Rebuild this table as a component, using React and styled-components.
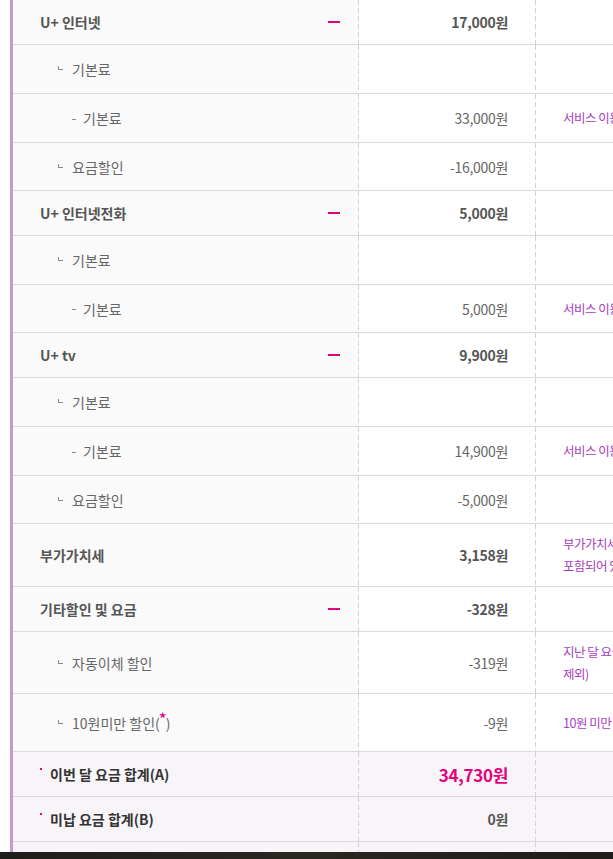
import React from 'react';
import styled, { createGlobalStyle } from 'styled-components';

const GlobalStyle = createGlobalStyle`
  html, body {
    margin: 0;
    padding: 0;
    background: #ffffff;
    overflow: hidden;
  }
  body {
    font-family: "Noto Sans CJK KR", "Noto Sans", sans-serif;
  }
`;

const Page = styled.div`
  width: 613px;
  height: 859px;
  display: flex;
  flex-direction: column;
  overflow: hidden;
`;

const Table = styled.div`
  flex: 1;
  margin-left: 10px;
  border-left: 3px solid #c39bcf;
  display: flex;
  flex-direction: column;
`;

const Row = styled.div`
  display: grid;
  grid-template-columns: 346px 177px 260px;
  height: ${p => p.$h}px;
  box-sizing: border-box;
  border-bottom: 1px solid #dadada;
  background: ${p => (p.$total ? '#f7f5f8' : '#ffffff')};
`;

const Filler = styled(Row)`
  flex: 1;
  height: auto;
  border-bottom: 0;
`;

const dashed = `
  background-image: linear-gradient(#d2d2d2 62%, transparent 0);
  background-size: 1px 8px;
  background-repeat: repeat-y;
  background-position: right top;
`;

const LabelCell = styled.div`
  display: flex;
  align-items: center;
  padding-left: ${p => p.$indent}px;
  padding-right: 19px;
  background-color: ${p => (p.$total ? 'transparent' : '#fafafa')};
  ${dashed}
  font-size: 14px;
  color: ${p => (p.$strong ? '#555555' : '#666666')};
  font-weight: ${p => (p.$strong ? 700 : 400)};
  white-space: nowrap;
`;

const LabelText = styled.span`
  flex: 1;
`;

const AmountCell = styled.div`
  display: flex;
  align-items: center;
  justify-content: flex-end;
  padding-right: 28px;
  ${dashed}
  font-size: ${p => (p.$big ? '17px' : '14px')};
  font-weight: ${p => (p.$strong ? 700 : 400)};
  color: ${p => (p.$big ? '#e5007e' : p.$strong ? '#555555' : '#666666')};
  letter-spacing: -0.3px;
  white-space: nowrap;
`;

const NoteCell = styled.div`
  display: flex;
  flex-direction: column;
  justify-content: center;
  padding-left: 27px;
  font-size: 12.5px;
  line-height: 22px;
  letter-spacing: -0.5px;
  color: #a83dbe;
  white-space: nowrap;
`;

const Corner = styled.i`
  display: inline-block;
  width: 5px;
  height: 4px;
  border-left: 1px solid #8a8a8a;
  border-bottom: 1px solid #8a8a8a;
  box-sizing: border-box;
  margin-right: 9px;
  position: relative;
  top: -1px;
`;

const Dash = styled.i`
  display: inline-block;
  width: 4px;
  height: 1px;
  background: #8a8a8a;
  margin-right: 7px;
  position: relative;
  top: 1px;
`;

const Dot = styled.i`
  display: inline-block;
  width: 2px;
  height: 2px;
  background: #e5007e;
  margin-right: 8px;
  align-self: flex-start;
  margin-top: 16px;
`;

const Toggle = styled.button`
  width: 12px;
  height: 2px;
  padding: 0;
  border: 0;
  background: #e5007e;
  cursor: pointer;
`;

const Star = styled.sup`
  color: #e5007e;
  font-size: 17px;
  line-height: 0;
  vertical-align: 3px;
  margin: 0 -1px;
`;

const TotalText = styled.span`
  color: #333333;
  font-weight: 700;
`;

const Footer = styled.div`
  height: 7px;
  background: linear-gradient(90deg, #1f1d1b, #2a2622 50%, #1e1c1a);
`;

const rows = [
  { type: 'group', label: 'U+ 인터넷', amount: '17,000원', toggle: true, h: 45 },
  { type: 'sub', label: '기본료', h: 49 },
  { type: 'item', label: '기본료', amount: '33,000원', note: ['서비스 이용기간 : 2024.05.01 ~ 2024.05.31'], h: 49 },
  { type: 'sub', label: '요금할인', amount: '-16,000원', h: 48 },
  { type: 'group', label: 'U+ 인터넷전화', amount: '5,000원', toggle: true, h: 45 },
  { type: 'sub', label: '기본료', h: 49 },
  { type: 'item', label: '기본료', amount: '5,000원', note: ['서비스 이용기간 : 2024.05.01 ~ 2024.05.31'], h: 48 },
  { type: 'group', label: 'U+ tv', amount: '9,900원', toggle: true, h: 45 },
  { type: 'sub', label: '기본료', h: 49 },
  { type: 'item', label: '기본료', amount: '14,900원', note: ['서비스 이용기간 : 2024.05.01 ~ 2024.05.31'], h: 49 },
  { type: 'sub', label: '요금할인', amount: '-5,000원', h: 48 },
  { type: 'group', label: '부가가치세', amount: '3,158원', note: ['부가가치세는 공급가액의 10%로 청구금액에', '포함되어 있습니다.'], h: 63 },
  { type: 'group', label: '기타할인 및 요금', amount: '-328원', toggle: true, h: 45 },
  { type: 'sub', label: '자동이체 할인', amount: '-319원', note: ['지난 달 요금의 1% 할인 (최대 1,000원, 일부 요금', '제외)'], h: 62 },
  { type: 'sub', label: '10원미만 할인', star: true, amount: '-9원', note: ['10원 미만 금액은 할인됩니다.'], h: 58 },
  { type: 'total', label: '이번 달 요금 합계(A)', amount: '34,730원', big: true, h: 45 },
  { type: 'total', label: '미납 요금 합계(B)', amount: '0원', h: 45 },
];

const indents = { group: 27, sub: 45, item: 59, total: 27 };

function BillRow({ row }) {
  const strong = row.type === 'group' || row.type === 'total';
  const total = row.type === 'total';
  return (
    <Row $h={row.h} $total={total}>
      <LabelCell $indent={indents[row.type]} $strong={strong} $total={total}>
        {row.type === 'sub' && <Corner />}
        {row.type === 'item' && <Dash />}
        {total && <Dot />}
        <LabelText>
          {total ? (
            <TotalText>{row.label}</TotalText>
          ) : row.star ? (
            <>
              {row.label}(<Star>*</Star>)
            </>
          ) : (
            row.label
          )}
        </LabelText>
        {row.toggle && <Toggle aria-label="접기" />}
      </LabelCell>
      <AmountCell $strong={strong} $big={row.big}>
        {row.amount}
      </AmountCell>
      <NoteCell>
        {(row.note || []).map((line, i) => (
          <span key={i}>{line}</span>
        ))}
      </NoteCell>
    </Row>
  );
}

export default function App() {
  return (
    <>
      <GlobalStyle />
      <Page>
        <Table>
          {rows.map((row, i) => (
            <BillRow key={i} row={row} />
          ))}
          <Filler $total>
            <LabelCell $total />
            <AmountCell />
            <NoteCell />
          </Filler>
        </Table>
        <Footer />
      </Page>
    </>
  );
}
